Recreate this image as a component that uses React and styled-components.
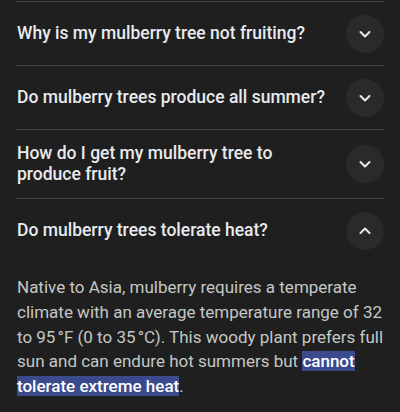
import React from "react";
import styled, { createGlobalStyle } from "styled-components";

const Global = createGlobalStyle`
  html, body { margin: 0; padding: 0; background: #1f1f1f; }
  body { font-family: Roboto, "Noto Sans", Arial, sans-serif; -webkit-font-smoothing: antialiased; }
`;

const Page = styled.div`
  width: 400px;
  height: 412px;
  overflow: hidden;
  background: #1f1f1f;
  padding: 1px 16px 0;
  box-sizing: border-box;
`;

const Item = styled.div`
  border-top: 1px solid #3c4043;
`;

const Header = styled.div`
  display: flex;
  align-items: center;
  justify-content: space-between;
  min-height: 63px;
  padding: ${(p) => (p.$tall ? "13px 0" : "0")};
  box-sizing: border-box;
  gap: 10px;
`;

const Question = styled.div`
  flex: 1;
  color: #e8eaed;
  font-size: 17.5px;
  font-weight: 500;
  line-height: 21px;
  padding-left: 1px;
`;

const Toggle = styled.div`
  flex: none;
  width: 38px;
  height: 38px;
  border-radius: 50%;
  background: #2a2a2b;
  display: flex;
  align-items: center;
  justify-content: center;
`;

const Answer = styled.p`
  margin: 0 -16px 0 0;
  padding: 13px 0 0 1px;
  color: #c4c7c5;
  font-size: 17px;
  line-height: 24.8px;
  white-space: nowrap;
`;

const Mark = styled.span`
  background: #3a4a8c;
  color: #ffffff;
  font-weight: 500;
`;

const Chevron = ({ up }) => (
  <svg width="14" height="14" viewBox="0 0 14 14">
    <polyline
      points={up ? "2.5,9 7,4.5 11.5,9" : "2.5,5 7,9.5 11.5,5"}
      fill="none"
      stroke="#e8eaed"
      strokeWidth="2"
      strokeLinecap="round"
      strokeLinejoin="round"
    />
  </svg>
);

const items = [
  { q: "Why is my mulberry tree not fruiting?" },
  { q: "Do mulberry trees produce all summer?" },
  { q: "How do I get my mulberry tree to produce fruit?", tall: true },
  { q: "Do mulberry trees tolerate heat?", open: true },
];

export default function App() {
  return (
    <>
      <Global />
      <Page>
        {items.map((it) => (
          <Item key={it.q}>
            <Header $tall={it.tall}>
              <Question>{it.q}</Question>
              <Toggle>
                <Chevron up={it.open} />
              </Toggle>
            </Header>
            {it.open && (
              <Answer>
                Native to Asia, mulberry requires a temperate
                <br />
                climate with an average temperature range of 32
                <br />
                to 95{"\u202F"}°F (0 to 35{"\u202F"}°C). This woody plant prefers full
                <br />
                sun and can endure hot summers but <Mark>cannot</Mark>
                <br />
                <Mark>tolerate extreme heat</Mark>.
              </Answer>
            )}
          </Item>
        ))}
      </Page>
    </>
  );
}
